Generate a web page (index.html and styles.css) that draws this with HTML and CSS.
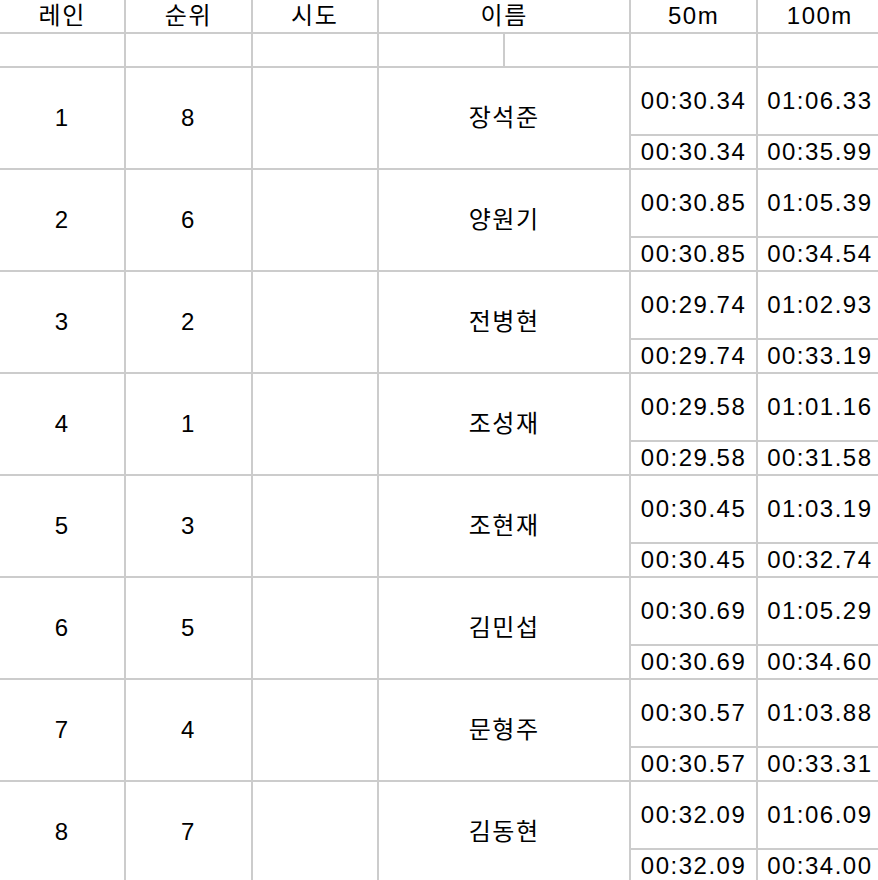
FILE: index.html
```html
<!DOCTYPE html>
<html lang="ko">
<head>
<meta charset="utf-8">
<link rel="stylesheet" href="styles.css">
<title>결과</title>
</head>
<body>
<div class="board">
  <div class="cell head">레인</div>
  <div class="cell head">순위</div>
  <div class="cell head">시도</div>
  <div class="cell head wide">이름</div>
  <div class="cell head">50m</div>
  <div class="cell head">100m</div>

  <div class="cell"></div><div class="cell"></div><div class="cell"></div><div class="cell"></div><div class="cell"></div><div class="cell"></div><div class="cell"></div>

  <div class="cell tall">1</div><div class="cell tall">8</div><div class="cell tall"></div><div class="cell tall wide">장석준</div>
  <div class="cell">00:30.34</div><div class="cell">01:06.33</div><div class="cell">00:30.34</div><div class="cell">00:35.99</div>

  <div class="cell tall">2</div><div class="cell tall">6</div><div class="cell tall"></div><div class="cell tall wide">양원기</div>
  <div class="cell">00:30.85</div><div class="cell">01:05.39</div><div class="cell">00:30.85</div><div class="cell">00:34.54</div>

  <div class="cell tall">3</div><div class="cell tall">2</div><div class="cell tall"></div><div class="cell tall wide">전병현</div>
  <div class="cell">00:29.74</div><div class="cell">01:02.93</div><div class="cell">00:29.74</div><div class="cell">00:33.19</div>

  <div class="cell tall">4</div><div class="cell tall">1</div><div class="cell tall"></div><div class="cell tall wide">조성재</div>
  <div class="cell">00:29.58</div><div class="cell">01:01.16</div><div class="cell">00:29.58</div><div class="cell">00:31.58</div>

  <div class="cell tall">5</div><div class="cell tall">3</div><div class="cell tall"></div><div class="cell tall wide">조현재</div>
  <div class="cell">00:30.45</div><div class="cell">01:03.19</div><div class="cell">00:30.45</div><div class="cell">00:32.74</div>

  <div class="cell tall">6</div><div class="cell tall">5</div><div class="cell tall"></div><div class="cell tall wide">김민섭</div>
  <div class="cell">00:30.69</div><div class="cell">01:05.29</div><div class="cell">00:30.69</div><div class="cell">00:34.60</div>

  <div class="cell tall">7</div><div class="cell tall">4</div><div class="cell tall"></div><div class="cell tall wide">문형주</div>
  <div class="cell">00:30.57</div><div class="cell">01:03.88</div><div class="cell">00:30.57</div><div class="cell">00:33.31</div>

  <div class="cell tall">8</div><div class="cell tall">7</div><div class="cell tall"></div><div class="cell tall wide">김동현</div>
  <div class="cell">00:32.09</div><div class="cell">01:06.09</div><div class="cell">00:32.09</div><div class="cell">00:34.00</div>
</div>
</body>
</html>
```

FILE: styles.css
```css
html, body {
  margin: 0;
  padding: 0;
  background: #fff;
  overflow: hidden;
}

.board {
  width: 882px;
  display: grid;
  grid-template-columns: repeat(7, 1fr);
  grid-template-rows: 32px 32px repeat(8, 66px 32px);
  gap: 2px;
  background: #cccccc;
  font-family: "Liberation Sans", "Noto Sans CJK KR", sans-serif;
  font-size: 24px;
  letter-spacing: 1.5px;
  color: #000;
}

.cell {
  background: #fff;
  display: flex;
  align-items: center;
  justify-content: center;
  white-space: nowrap;
  line-height: 1;
}

.wide {
  grid-column: span 2;
}

.tall {
  grid-row: span 2;
}
```
